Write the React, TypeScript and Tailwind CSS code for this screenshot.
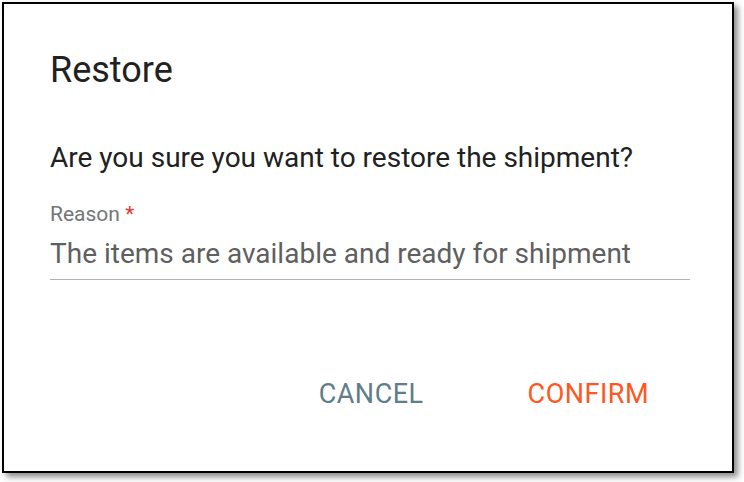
export default function App() {
  return (
    <div className="w-[744px] h-[482px] bg-white" style={{ fontFamily: "Roboto, 'Liberation Sans', sans-serif" }}>
      <div className="ml-[2px] mt-[2px] w-[732px] h-[471px] border-2 border-black bg-white shadow-[4px_4px_6px_rgba(0,0,0,0.45)] flex flex-col px-[46px]">
        <h1 className="mt-[46px] text-[36px] leading-[40px] text-[#212121] font-normal">Restore</h1>
        <p className="mt-[52px] text-[28px] leading-[32px] text-[#212121]">Are you sure you want to restore the shipment?</p>
        <div className="mt-[28px] w-[640px] flex flex-col">
          <label className="text-[21px] leading-[24px] text-[#757575]">
            Reason <span className="text-[#e53935]">*</span>
          </label>
          <div className="mt-[12px] text-[28px] leading-[32px] text-[#5f5f5f] pb-[9px] border-b-[1.5px] border-[#b3b3b3]">
            The items are available and ready for shipment
          </div>
        </div>
        <div className="mt-[99px] flex justify-end gap-[104px] pr-[37px]">
          <button className="text-[27px] leading-[30px] tracking-[0.5px] text-[#607d8b] uppercase">Cancel</button>
          <button className="text-[27px] leading-[30px] tracking-[0.5px] text-[#ff5722] uppercase">Confirm</button>
        </div>
      </div>
    </div>
  );
}
